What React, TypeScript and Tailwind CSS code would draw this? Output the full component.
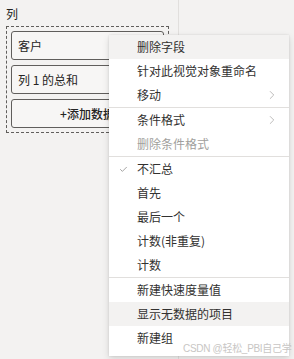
import { Check, ChevronRight } from "lucide-react";

type Item = {
  label: string;
  active?: boolean;
  disabled?: boolean;
  checked?: boolean;
  submenu?: boolean;
  divider?: boolean;
};

const items: Item[] = [
  { label: "删除字段", active: true },
  { label: "针对此视觉对象重命名" },
  { label: "移动", submenu: true, divider: true },
  { label: "条件格式", submenu: true },
  { label: "删除条件格式", disabled: true, divider: true },
  { label: "不汇总", checked: true },
  { label: "首先" },
  { label: "最后一个" },
  { label: "计数(非重复)" },
  { label: "计数", divider: true },
  { label: "新建快速度量值" },
  { label: "显示无数据的项目", active: true },
  { label: "新建组" },
];

const font = "font-['Segoe_UI','Noto_Sans_CJK_SC',sans-serif]";

function Field({ children, bold }: { children: string; bold?: boolean }) {
  return (
    <div
      className={`flex h-[29px] items-center rounded-[3px] border border-[#605e5c] bg-[#f7f6f5] px-[6px] text-[12px] text-[#252423] ${
        bold ? "justify-center font-medium" : ""
      }`}
    >
      {children}
    </div>
  );
}

function MenuRow({ item }: { item: Item }) {
  return (
    <div
      className={`relative flex h-6 items-center pl-[28px] pr-[10px] text-[12px] ${
        item.active ? "bg-[#f3f2f1]" : ""
      } ${item.disabled ? "text-[#a19f9d]" : "text-[#323130]"}`}
    >
      {item.checked && (
        <Check className="absolute left-[10px] size-[9px] text-[#605e5c]" strokeWidth={1.5} />
      )}
      <span className="flex-1">{item.label}</span>
      {item.submenu && <ChevronRight className="size-[14px] text-[#a19f9d]" strokeWidth={1.2} />}
    </div>
  );
}

export default function App() {
  return (
    <div className={`relative h-[359px] w-[294px] overflow-hidden bg-[#f3f2f1] ${font}`}>
      <div className="h-full w-[179px] border-r border-[#e1dfdd] pl-[6px] pr-[9px] pt-[6px]">
        <p className="text-[12px] leading-[16px] text-[#252423]">列</p>
        <div className="mt-[4px] flex flex-col gap-[5px] border border-dashed border-[#605e5c] p-[4px]">
          <Field>客户</Field>
          <Field>列 1 的总和</Field>
          <Field bold>+添加数据</Field>
        </div>
      </div>

      <div className="absolute left-[109px] top-[35px] w-[180px] bg-white pb-[6px] shadow-[0_3px_7px_rgba(0,0,0,0.13),0_0_2px_rgba(0,0,0,0.11)]">
        {items.map((item) => (
          <div key={item.label} className={item.divider ? "border-b border-[#e1dfdd]" : ""}>
            <MenuRow item={item} />
          </div>
        ))}
      </div>

      <span className="absolute left-[183px] top-[341px] whitespace-nowrap font-['Liberation_Sans','Noto_Sans_CJK_SC',sans-serif] text-[10px] tracking-[-0.3px] text-[#c8c6c4]">
        CSDN @轻松_PBI自己学
      </span>
    </div>
  );
}
